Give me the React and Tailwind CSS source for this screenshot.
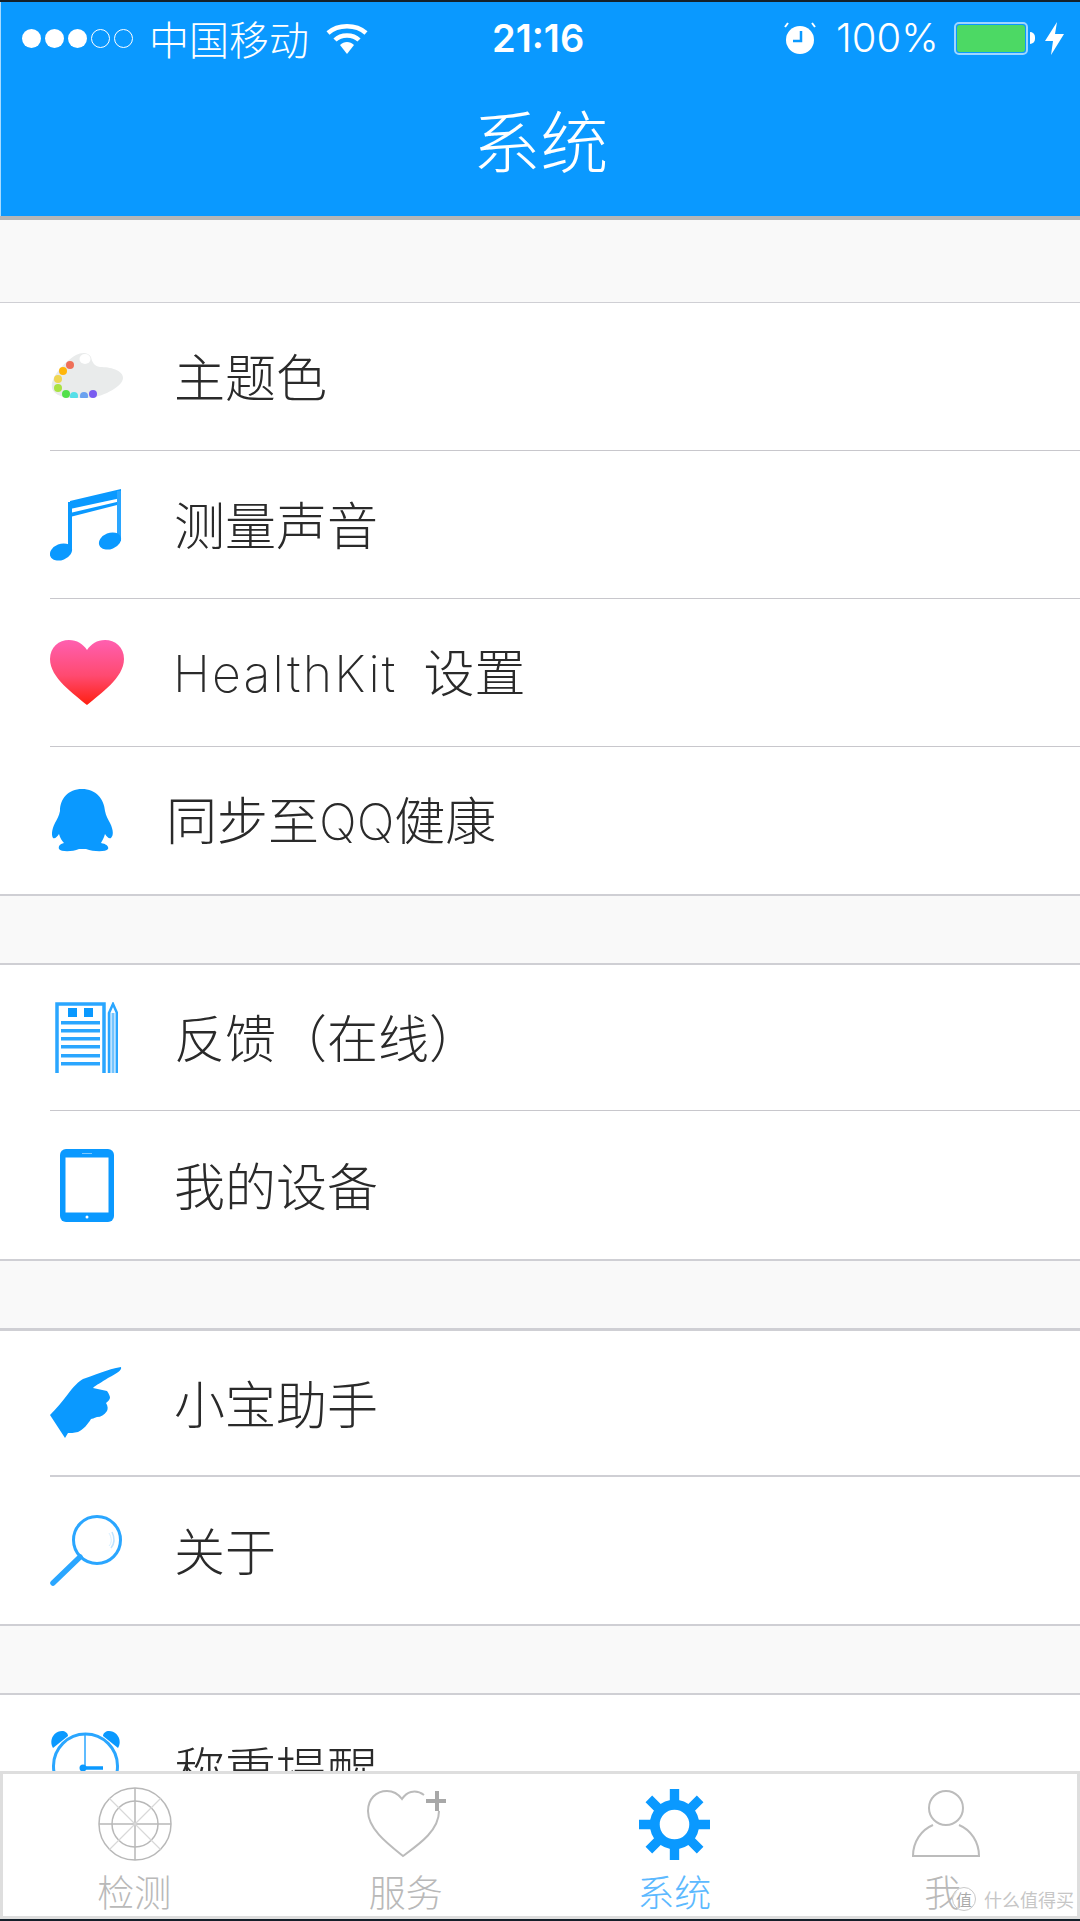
const BLUE = "#0a99ff";
const CJK = "font-['Noto_Sans_CJK_SC','Noto_Sans',sans-serif]";
const LATIN = "font-['Inter',sans-serif] font-extralight";

const Palette = () => (
  <svg width="74" height="46" viewBox="0 0 74 46" className="-mt-[4px]">
    <path d="M2 36C0 26 14 10 26 3C32 0 38 0 41 5C42 10 44 14 50 15C60 15 73 18 73 26C73 34 55 44 40 46C25 48 4 46 2 36Z" fill="#e9ebeb" />
    <ellipse cx="35" cy="7" rx="5.500" ry="5" fill="#fff" />
    {[[20,13,"#ef6f58"],[13,19,"#ffb60a"],[8,27,"#efd653"],[8,36,"#a9e243"],[16,42,"#52e04a"],[24,44,"#55dfe8"],[34,44,"#6ba2ef"],[43,42,"#7a5cf0"]].map(([x,y,c]) => (
      <circle key={x+"-"+y} cx={x} cy={y} r="4" fill={c} />
    ))}
  </svg>
);
const Music = () => (
  <svg width="72" height="72" viewBox="0 0 72 72">
    <path d="M20 12L71 0V9L20 20ZM20 24L71 12V15L20 28Z" fill={BLUE} />
    <path d="M20 13V62" stroke={BLUE} strokeWidth="4" />
    <path d="M69 2V52" stroke="#2aa6ff" strokeWidth="4" />
    <ellipse cx="11" cy="63" rx="11.500" ry="8" transform="rotate(-22 11 63)" fill={BLUE} />
    <ellipse cx="60" cy="52" rx="11.500" ry="8" transform="rotate(-22 60 52)" fill={BLUE} />
  </svg>
);
const Heart = () => (
  <svg width="74" height="65" viewBox="0 0 74 65">
    <defs>
      <linearGradient id="hg" x1="0" y1="0" x2="0" y2="1">
        <stop offset="0" stopColor="#ff5fb0" />
        <stop offset="0.55" stopColor="#ff4a70" />
        <stop offset="1" stopColor="#ff1f10" />
      </linearGradient>
    </defs>
    <path d="M37 65C24 54 0 38 0 19C0 7 9 0 19 0C27 0 33 4 37 10C41 4 47 0 55 0C65 0 74 7 74 19C74 38 50 54 37 65Z" fill="url(#hg)" />
  </svg>
);
const QQ = () => (
  <svg width="61" height="63" viewBox="0 0 61 63" className="ml-[2px]">
    <path d="M30 0C44 0 52 10 53 22C54 27 56 30 58 34C61 40 62 46 59 49C57 50 55 48 53 45C52 49 50 52 49 54C55 55 57 58 56 60C54 63 42 63 34 60H27C20 63 9 63 7 60C6 57 8 55 12 54C10 52 8 49 7 45C5 48 3 50 1 49C-1 46 0 40 3 34C5 30 7 27 8 22C8 10 16 0 30 0Z" fill={BLUE} />
  </svg>
);
const Notepad = () => (
  <svg width="63" height="72" viewBox="0 0 63 72" className="ml-[5px]">
    <path d="M49 71V2H2V71" fill="none" stroke="#2aa6ff" strokeWidth="3.500" />
    <rect x="13" y="6" width="9" height="9" fill={BLUE} />
    <rect x="29" y="6" width="9" height="9" fill={BLUE} />
    {[19,27,35,43,52,60].map((y) => <rect key={y} x="6" y={y} width="39" height="3.500" fill="#2aa6ff" />)}
    <path d="M54 11H62V71H54Z" fill="#bfe3ff" />
    <path d="M54 71V11L58 2L62 11V71" fill="none" stroke="#2aa6ff" strokeWidth="2.500" />
    <path d="M58 11V71" stroke="#2aa6ff" strokeWidth="1" />
  </svg>
);
const Tablet = () => (
  <svg width="54" height="73" viewBox="0 0 54 73" className="ml-[10px]">
    <rect width="54" height="73" rx="6" fill={BLUE} />
    <rect x="5.500" y="8.500" width="43" height="55" fill="#fff" />
    <circle cx="27" cy="68" r="1.500" fill="#fff" />
    <rect x="22" y="4" width="10" height="1" fill="#7cc8ff" />
  </svg>
);
const Hand = () => (
  <svg width="72" height="72" viewBox="0 0 72 72">
    <path d="M71 0C72 3 68 6 58 11C52 15 46 18 43 21L57 24C59 27 60 29 60 31C59 34 57 35 56 36C58 39 58 42 57 44C54 48 51 50 47 50C44 51 42 52 41 52C38 57 33 63 28 65C24 66 20 66 18 66L15 71L0 48C6 42 12 35 18 27C23 20 29 14 33 12C42 9 58 2 71 0Z" fill={BLUE} />
  </svg>
);
const Magnifier = () => (
  <svg width="72" height="72" viewBox="0 0 72 72">
    <circle cx="47" cy="25" r="23.500" fill="none" stroke="#2aa6ff" strokeWidth="3" />
    <path d="M30 42L3 68" stroke="#2aa6ff" strokeWidth="5.500" strokeLinecap="round" />
    <path d="M62 17C65 23 65 28 61 33" fill="none" stroke="#bfe3ff" strokeWidth="1.500" />
    <path d="M59 18C62 23 62 28 59 31" fill="none" stroke="#d8efff" strokeWidth="1" />
  </svg>
);
const AlarmBlue = () => (
  <svg width="72" height="76" viewBox="0 0 72 76" className="shrink-0">
    <path d="M3 17C-2 8 5 0 12 0C15 0 18 2 18 5Z" fill={BLUE} />
    <path d="M68 17C73 8 66 0 59 0C56 0 53 2 53 5Z" fill={BLUE} />
    <circle cx="35.500" cy="35" r="32" fill="none" stroke="#2aa6ff" strokeWidth="3" />
    <path d="M35 2V37" stroke="#2aa6ff" strokeWidth="1.500" />
    <path d="M31 37H53" stroke={BLUE} strokeWidth="3.500" />
    <circle cx="33" cy="37" r="3.500" fill={BLUE} />
  </svg>
);

const Radar = () => (
  <svg width="76" height="74" viewBox="0 0 76 74">
    <g fill="none" stroke="#b8b8b8" strokeWidth="1.500">
      <circle cx="38" cy="37" r="36" />
      <circle cx="38" cy="37" r="23" />
      <path d="M38 1V73M2 37H74" />
    </g>
    <path d="M12.500 11.500L63.500 62.500M63.500 11.500L12.500 62.500" stroke="#d8d8d8" strokeWidth="1.200" />
  </svg>
);
const HeartPlus = () => (
  <svg width="80" height="70" viewBox="0 0 80 70">
    <path d="M58 6C54 3 49 2 45 3C41 4 38 7 36 10C33 6 28 2 21 2C10 2 2 10 2 22C2 40 22 55 37 67C52 56 73 42 73 22" fill="none" stroke="#bbb" strokeWidth="2" />
    <path d="M71 2V22M60 12H80" stroke="#a8a8a8" strokeWidth="4" />
  </svg>
);
const Gear = () => (
  <svg width="71" height="71" viewBox="0 0 72 72">
    <g stroke={BLUE} strokeWidth="9.500">
      <path d="M36 0V72M0 36H72M10 10L62 62M62 10L10 62" />
    </g>
    <circle cx="36" cy="36" r="20" fill="#fff" stroke={BLUE} strokeWidth="10" />
  </svg>
);
const Person = () => (
  <svg width="70" height="68" viewBox="0 0 70 68">
    <g fill="none" stroke="#bcbcbc" strokeWidth="2">
      <circle cx="35" cy="18" r="17" />
      <path d="M22 35C10 40 2 52 2 66H68C68 52 60 40 48 35" />
    </g>
  </svg>
);
const StatusAlarm = () => (
  <svg width="32" height="33" viewBox="0 0 32 33">
    <circle cx="16" cy="18" r="14" fill="#fff" />
    <path d="M17 9V19H9" fill="none" stroke={BLUE} strokeWidth="2.500" />
    <path d="M4 1L1 5M28 1L31 5" stroke="#fff" strokeWidth="2" />
  </svg>
);
const Wifi = () => (
  <svg width="42" height="31" viewBox="0 0 42 31">
    <g fill="none" stroke="#fff" strokeWidth="4.500">
      <path d="M2 10C12 1 30 1 40 10" />
      <path d="M9 17C15 11 27 11 33 17" />
    </g>
    <path d="M14 22C18 18 24 18 28 22L21 31Z" fill="#fff" />
  </svg>
);
const Bolt = () => (
  <svg width="19" height="33" viewBox="0 0 19 33">
    <path d="M12 0L0 19H8L6 33L19 12H10Z" fill="#fff" />
  </svg>
);

const Row = ({ icon, children, cls = "ml-[49px]", rowCls }) => (
  <div className="pl-[50px]">
    <div className={`flex items-center ${rowCls}`}>
      <div className="flex w-[75px] shrink-0 items-center">{icon}</div>
      <span className={`${cls} ${CJK} pb-[2px] text-[51px] font-extralight leading-none whitespace-nowrap text-[#2a2a2a]`}>{children}</span>
    </div>
  </div>
);

const Tab = ({ icon, label, active, iconCls = "", labelCls = "" }) => (
  <div className="flex flex-1 flex-col items-center">
    <div className={`flex h-[74px] items-center ${iconCls}`}>{icon}</div>
    <span className={`mt-[10px] ${CJK} text-[37px] font-light leading-[40px] ${labelCls} ${active ? "text-[#5cb9ff]" : "text-[#b9b9b9]"}`}>{label}</span>
  </div>
);

const line = "border-b border-[#c8c7cc]";

export default function App() {
  return (
    <div className="relative flex h-[1921px] w-[1080px] flex-col overflow-hidden bg-white">
      <div className="h-[2px] shrink-0 bg-[#14202a]" />
      <header className="flex h-[214px] shrink-0 flex-col border-l border-[#a8dbff] bg-[#0a99ff] text-white">
        <div className="flex h-[70px] items-center pt-[2px]">
          <div className="ml-[21px] flex items-center gap-[4px]">
            <span className="h-[19px] w-[19px] rounded-full bg-white" />
            <span className="h-[19px] w-[19px] rounded-full bg-white" />
            <span className="h-[19px] w-[19px] rounded-full bg-white" />
            <span className="h-[19px] w-[19px] rounded-full border border-white" />
            <span className="h-[19px] w-[19px] rounded-full border border-white" />
          </div>
          <span className={`ml-[16px] ${CJK} text-[40px] font-light leading-none`}>中国移动</span>
          <span className="ml-[17px] flex"><Wifi /></span>
          <span className="ml-[124px] w-[97px] font-['Inter',sans-serif] text-[38px] font-semibold leading-none whitespace-nowrap">21:16</span>
          <span className="ml-[195px] flex"><StatusAlarm /></span>
          <span className="ml-[20px] font-['Inter',sans-serif] text-[40px] font-light leading-none">100%</span>
          <div className="ml-[15px] flex items-center">
            <div className="h-[33px] w-[74px] rounded-[5px] border-2 border-[#9fd6ff] p-[1px]">
              <div className="h-full w-full rounded-[3px] bg-[#4cd964]" />
            </div>
            <div className="ml-[2px] h-[12px] w-[5px] rounded-r-full bg-white" />
          </div>
          <span className="ml-[10px] flex"><Bolt /></span>
        </div>
        <div className={`mt-[27px] text-center ${CJK} text-[68px] font-extralight leading-[80px]`}>系统</div>
      </header>
      <div className="h-[4px] shrink-0 bg-[#b4b6b8]" />

      <main className="min-h-0 flex-1 overflow-hidden bg-[#f9f9f9]">
        <div className="mt-[82px] border-t border-b-2 border-[#cfcfd4] bg-white">
          <Row icon={<Palette />} rowCls={`h-[148px] ${line}`}>主题色</Row>
          <Row icon={<Music />} rowCls={`h-[148px] ${line}`}>测量声音</Row>
          <Row icon={<Heart />} rowCls={`h-[148px] ${line}`} cls="ml-[48px]">
            <span className={`${LATIN} text-[50px] tracking-[2.2px]`}>HealthKit</span>
            <span className="ml-[26px]">设置</span>
          </Row>
          <Row icon={<QQ />} rowCls="h-[147px]" cls="ml-[41px]">
            同步至<span className={`${LATIN} text-[50px]`}>QQ</span>健康
          </Row>
        </div>
        <div className="mt-[67px] border-y-2 border-[#cfcfd4] bg-white">
          <Row icon={<Notepad />} rowCls={`h-[146px] ${line}`}>反馈（在线）</Row>
          <Row icon={<Tablet />} rowCls="h-[148px]">我的设备</Row>
        </div>
        <div className="mt-[67px] border-t-[3px] border-b-2 border-[#cfcfd4] bg-white">
          <Row icon={<Hand />} rowCls="h-[146px] border-b-2 border-[#cfcfd4]">小宝助手</Row>
          <Row icon={<Magnifier />} rowCls="h-[147px]">关于</Row>
        </div>
        <div className="mt-[67px] border-t-2 border-[#cfcfd4] bg-white">
          <Row icon={<AlarmBlue />} rowCls="h-[148px]">称重提醒</Row>
        </div>
      </main>

      <nav className="flex h-[148px] shrink-0 border-[3px] border-[#dedede] bg-white pt-[13px]">
        <Tab icon={<Radar />} label="检测" iconCls="-translate-x-[2px]" labelCls="-translate-x-[3px]" />
        <Tab icon={<HeartPlus />} label="服务" />
        <Tab icon={<Gear />} label="系统" active />
        <Tab icon={<Person />} label="我" iconCls="translate-x-[3px]" />
      </nav>
      <div className="h-[2px] shrink-0 bg-[#14202a]" />

      <div className="absolute left-[952px] top-[1887px] flex items-center gap-[8px]">
        <span className={`flex h-[24px] w-[24px] items-center justify-center rounded-full border border-[#c9c9c9] bg-white/60 ${CJK} text-[16px] leading-none text-[#aaa]`}>值</span>
        <span className={`${CJK} text-[18px] leading-none text-[#c6c6c6]`}>什么值得买</span>
      </div>
    </div>
  );
}
